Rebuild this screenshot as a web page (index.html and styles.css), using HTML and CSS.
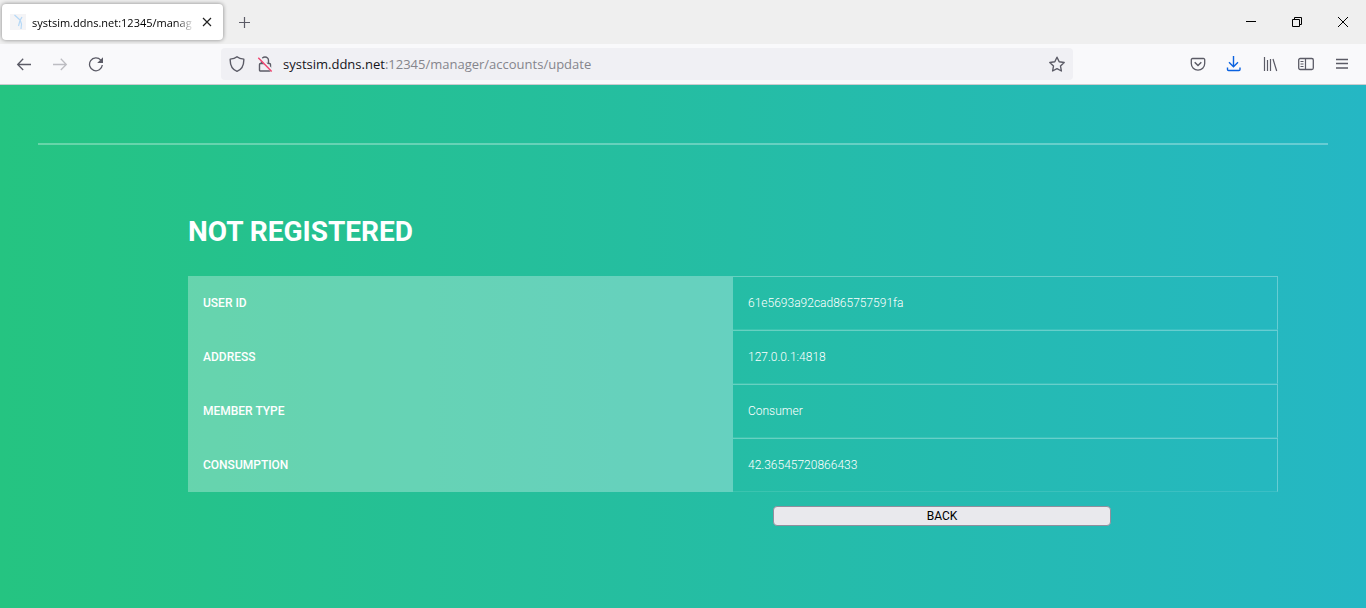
FILE: index.html
```html
<!DOCTYPE html>
<html lang="en">
<head>
<meta charset="utf-8">
<meta name="viewport" content="width=device-width, initial-scale=1">
<title>systsim.ddns.net:12345/manager/accounts/update</title>
<link rel="stylesheet" href="styles.css">
</head>
<body>
<header class="browser">
  <div class="tabbar">
    <div class="tab">
      <svg class="favicon" width="16" height="16" viewBox="0 0 16 16"><rect width="16" height="16" fill="#f4f4f6"/><path d="M4.500 1l5.500 5M12 3L10 6.500 8.500 12M10 5.500L11.500 10 11 15" fill="none" stroke="#b5d8f6" stroke-width="1.200"/></svg>
      <span class="tab-title">systsim.ddns.net:12345/manag</span>
      <button class="icon tab-close" aria-label="Close tab"><svg width="16" height="16" viewBox="0 0 16 16"><path d="M4 4l8 8M12 4l-8 8" stroke="#222" stroke-width="1.200"/></svg></button>
    </div>
    <button class="icon new-tab" aria-label="New tab"><svg width="16" height="16" viewBox="0 0 16 16"><path d="M8.500 3v11M3 8.500h11" stroke="#5b5b66" stroke-width="1.200"/></svg></button>
    <div class="window-controls">
      <button class="icon" aria-label="Minimize"><svg width="16" height="16" viewBox="0 0 16 16"><path d="M3 7.500h10" stroke="#000"/></svg></button>
      <button class="icon" aria-label="Restore"><svg width="16" height="16" viewBox="0 0 16 16"><path d="M3.500 5.500h7v7h-7zM5.500 5.500v-2h7v7h-2" fill="none" stroke="#000"/></svg></button>
      <button class="icon" aria-label="Close"><svg width="16" height="16" viewBox="0 0 16 16"><path d="M3 3l10 10M13 3L3 13" stroke="#000"/></svg></button>
    </div>
  </div>
  <nav class="toolbar">
    <div class="nav-buttons">
      <button class="icon" aria-label="Back"><svg width="16" height="16" viewBox="0 0 16 16"><path d="M15 8.500H2M7.200 2.800L1.700 8.500l5.500 5.500" fill="none" stroke="#5b5b66" stroke-width="1.300"/></svg></button>
      <button class="icon" aria-label="Forward" disabled><svg width="16" height="16" viewBox="0 0 16 16"><path d="M1 8.500h13M8.800 2.800l5.500 5.700L8.800 14" fill="none" stroke="#bdbdc2" stroke-width="1.300"/></svg></button>
      <button class="icon" aria-label="Reload"><svg width="16" height="16" viewBox="0 0 16 16"><path d="M12.800 4.200A6.400 6.400 0 1 0 14.300 9" fill="none" stroke="#5b5b66" stroke-width="1.300"/><path d="M15 1.200V7H9.200z" fill="#5b5b66"/></svg></button>
    </div>
    <div class="urlbar">
      <svg width="16" height="16" viewBox="0 0 16 16"><path d="M8 .8C6.200 2.300 3.900 2.900 1.200 3.100 1 9 3.400 13.500 8 15.300c4.600-1.800 7-6.300 6.800-12.200C12.100 2.900 9.800 2.300 8 .8z" fill="none" stroke="#5b5b66" stroke-width="1.400" stroke-linejoin="round"/></svg>
      <svg width="16" height="16" viewBox="0 0 16 16"><path d="M4.500 7V4.500a3.500 3.500 0 0 1 7 0V7M3.500 7.500h9a1 1 0 0 1 1 1V14a1 1 0 0 1-1 1h-9a1 1 0 0 1-1-1V8.500a1 1 0 0 1 1-1z" fill="none" stroke="#5b5b66" stroke-width="1.400"/><path d="M2.300 1.200L15.300 15" stroke="#f0f0f4" stroke-width="3"/><path d="M1.300 1.800L14.700 15.500" stroke="#f0426e" stroke-width="1.400"/></svg>
      <a class="url" href="#"><span class="url-host">systsim.ddns.net</span>:12345/manager/accounts/update</a>
      <button class="icon" aria-label="Bookmark"><svg width="16" height="16" viewBox="0 0 16 16"><path d="M8 1.200l2.200 4.600 5 .7-3.700 3.500.9 5L8 12.600 3.600 15l.9-5L.8 6.500l5-.7z" fill="none" stroke="#5b5b66" stroke-width="1.400" stroke-linejoin="round"/></svg></button>
    </div>
    <div class="tools">
      <button class="icon" aria-label="Pocket"><svg width="16" height="16" viewBox="0 0 16 16"><path d="M2.500 2.500h11a1.200 1.200 0 0 1 1.200 1.200V7.500a6.700 6.700 0 0 1-13.400 0V3.700A1.200 1.200 0 0 1 2.500 2.500z" fill="none" stroke="#5b5b66" stroke-width="1.300"/><path d="M4.700 6.300L8 9.500l3.300-3.200" fill="none" stroke="#5b5b66" stroke-width="1.500"/></svg></button>
      <button class="icon" aria-label="Downloads"><svg width="16" height="16" viewBox="0 0 16 16"><path d="M7.500 0v10.500M3 6.300l4.500 4.500L12 6.300M1.500 11.500v2a1 1 0 0 0 1 1h10.500a1 1 0 0 0 1-1v-2" fill="none" stroke="#0b62e0" stroke-width="1.400"/></svg></button>
      <button class="icon" aria-label="Library"><svg width="16" height="16" viewBox="0 0 16 16"><path d="M2.500 1v14M5.500 4v11M8.500 3v12M11 3l3.700 12" fill="none" stroke="#5b5b66" stroke-width="1.200"/></svg></button>
      <button class="icon" aria-label="Sidebars"><svg width="16" height="16" viewBox="0 0 16 16"><rect x=".7" y="2.500" width="14.600" height="11" rx="1.500" fill="none" stroke="#5b5b66" stroke-width="1.300"/><path d="M7.500 3v10M2.500 5.500h3M2.500 8h3M2.500 10.500h3" stroke="#5b5b66" stroke-width="1.200"/></svg></button>
      <button class="icon" aria-label="Menu"><svg width="16" height="16" viewBox="0 0 16 16"><path d="M2 3.500h12M2 7.500h12M2 12h12" stroke="#5b5b66" stroke-width="1.300"/></svg></button>
    </div>
  </nav>
</header>
<main class="page">
  <hr class="rule">
  <section class="account">
    <h1 class="heading">NOT REGISTERED</h1>
    <table class="details">
      <tbody>
        <tr><th scope="row">USER ID</th><td>61e5693a92cad865757591fa</td></tr>
        <tr><th scope="row">ADDRESS</th><td>127.0.0.1:4818</td></tr>
        <tr><th scope="row">MEMBER TYPE</th><td>Consumer</td></tr>
        <tr><th scope="row">CONSUMPTION</th><td>42.36545720866433</td></tr>
      </tbody>
    </table>
  </section>
  <div class="actions"><button class="back">BACK</button></div>
</main>
</body>
</html>
```
FILE: styles.css
```css
* { box-sizing: border-box; }
body {
  margin: 0;
  min-height: 100vh;
  display: flex;
  flex-direction: column;
  font-family: Roboto, "Liberation Sans", sans-serif;
}
svg { display: block; flex: none; }
.icon {
  padding: 0;
  border: 0;
  background: none;
  flex: none;
}
.browser { font-family: "Open Sans", "Noto Sans", sans-serif; }
.tabbar {
  display: flex;
  align-items: center;
  height: 44px;
  padding-left: 2px;
  background: #efefef;
}
.tab {
  display: flex;
  align-items: center;
  width: 221px;
  height: 36px;
  padding: 0 8px;
  border-radius: 4px;
  background: #fff;
  box-shadow: 0 0 4px rgba(0, 0, 0, .45);
}
.tab-title {
  flex: 1;
  min-width: 0;
  margin: 0 4px 0 6px;
  white-space: nowrap;
  font-size: 11px;
  color: #000;
  mask-image: linear-gradient(to left, transparent, #000 20px);
}
.new-tab { margin-left: 13px; }
.window-controls {
  display: flex;
  gap: 30px;
  margin-left: auto;
  padding-right: 15px;
}
.toolbar {
  display: flex;
  align-items: center;
  height: 41px;
  padding: 0 16px;
  background: #f9f9fb;
  border-bottom: 1px solid #cccccf;
}
.nav-buttons { display: flex; gap: 20px; }
.urlbar {
  display: flex;
  align-items: center;
  gap: 12px;
  flex: 1;
  height: 32px;
  margin: 0 117px;
  padding: 0 8px;
  border-radius: 4px;
  background: #f0f0f4;
}
.url {
  flex: 1;
  margin-left: -2px;
  font-size: 13px;
  color: #85858c;
  text-decoration: none;
  white-space: nowrap;
}
.url-host { color: #15141a; }
.tools { display: flex; gap: 20px; }
.page {
  flex: 1;
  padding: 58px 38px 0;
  background: linear-gradient(to right, #25c481, #25b7c4);
}
.rule {
  height: 2px;
  margin: 0;
  border: 0;
  background: rgba(255, 255, 255, .3);
}
.account { padding: 70px 50px 0 150px; }
.heading {
  margin: 0 0 27px;
  font-size: 28px;
  line-height: 34px;
  font-weight: 700;
  color: #fff;
}
.details {
  width: 100%;
  table-layout: fixed;
  border-collapse: separate;
  border-spacing: 0;
  font-size: 12px;
  color: #fff;
}
.details th,
.details td {
  height: 54px;
  padding: 0 15px;
  text-align: left;
}
.details th {
  width: calc(50% + 1px);
  background: rgba(255, 255, 255, .3);
  font-weight: 500;
}
.details td {
  width: calc(50% - 1px);
  border: solid rgba(255, 255, 255, .3);
  border-width: 1px 1px 1px 0;
  border-bottom-color: rgba(255, 255, 255, .1);
  font-weight: 300;
}
.actions {
  display: flex;
  justify-content: center;
  padding: 14px 0 0 518px;
}
.back {
  width: 338px;
  height: 20px;
  padding: 0;
  border: 1px solid #8f8f9d;
  border-radius: 4px;
  background: #e9e9ed;
  font: 400 12px Roboto, sans-serif;
  color: #000;
}
```
